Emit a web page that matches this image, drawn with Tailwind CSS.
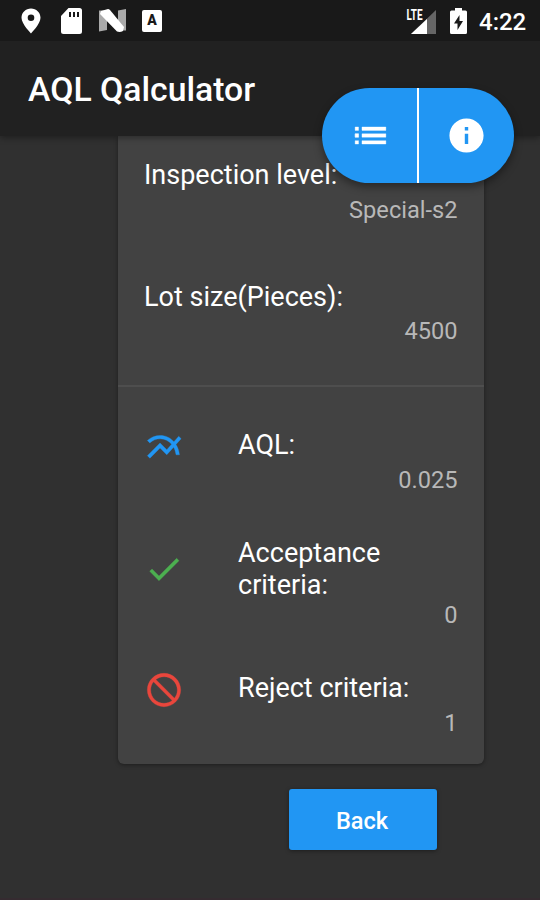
<!DOCTYPE html>
<html lang="en">
<head>
<meta charset="utf-8">
<title>AQL Qalculator</title>
<script src="https://cdn.jsdelivr.net/npm/@tailwindcss/browser@4"></script>
</head>
<body class="bg-[#303030] font-[Roboto,sans-serif] text-white">
<div class="relative flex h-[900px] w-[540px] flex-col overflow-hidden border-b-2 border-[#352b30] bg-[#303030]">
  <header class="relative z-10 h-[136px] shrink-0 bg-[#212121] shadow-[0_2px_6px_rgba(0,0,0,0.35)]">
    <div class="flex h-[41px] items-center bg-[#191919] pl-[21px] pr-[14px]">
      <svg class="h-[26px] w-5" viewBox="0 0 20 26"><path fill="#fff" fill-rule="evenodd" d="M10 0.5C4.800.5.500 4.500.500 9.800.500 16 10 25.500 10 25.500S19.500 16 19.500 9.800C19.500 4.500 15.200.500 10 .500ZM10 6.500a3.300 3.300 0 1 1 0 6.600 3.300 3.300 0 0 1 0-6.600Z"/></svg>
      <svg class="ml-5 h-[26px] w-[21px]" viewBox="0 0 21 26"><path fill="#fff" fill-rule="evenodd" d="M7.500 0H18.500Q21 0 21 2.500V23.500Q21 26 18.500 26H2.500Q0 26 0 23.500V8ZM8 4V9H10V4ZM12 4V9H14V4ZM16 4V9H18V4Z"/></svg>
      <svg class="ml-[17px] h-[23px] w-[27px]" viewBox="0 0 27 23"><path fill="#aaa" d="M0 1.500H8V21L0 22.500ZM19 1.500 27 0V21.500H19Z"/><path fill="#fff" d="M2 2 9 0Q10 0 11 1L25 18 24 22Q21 23.500 18 22.500L1 5Z"/></svg>
      <div class="ml-[16px] flex h-[22px] w-5 items-center justify-center rounded-[2px] bg-white text-[14px] font-black text-[#191919]">A</div>
      <svg class="ml-auto h-[26px] w-[31px]" viewBox="0 0 31 26"><path fill="#666" d="M30 2V26H5Z"/><path fill="#fff" d="M21 11V26H5Z"/><path fill="#191919" d="M0 0H17.500V13H0Z"/><text x="0.500" y="12" fill="#fff" font-family="Roboto" font-size="14" font-weight="700" textLength="16" lengthAdjust="spacingAndGlyphs">LTE</text></svg>
      <svg class="ml-[13px] h-[26px] w-[17px]" viewBox="0 0 17 26"><path fill="#fff" fill-rule="evenodd" d="M5 0H12V2.500H15.500Q17 2.500 17 4V24.500Q17 26 15.500 26H1.500Q0 26 0 24.500V4Q0 2.500 1.500 2.500H5ZM9.500 7 4 15.500H7.500V22L13 13H9.500Z"/></svg>
      <div class="ml-3 w-[47px] whitespace-nowrap pt-[3px] text-[24px] leading-7 font-medium">4:22</div>
    </div>
    <h1 class="pl-[28px] pt-[29px] text-[33.75px] leading-10 font-medium">AQL Qalculator</h1>
  </header>

  <nav class="absolute left-[322px] top-[88px] z-20 flex h-[95px] w-[192px] overflow-hidden rounded-full bg-[#2196f3] shadow-[0_4px_9px_rgba(0,0,0,0.4)]">
    <button class="flex w-[95px] items-center justify-center pl-px" aria-label="List">
      <svg class="h-[41px] w-[41px]" viewBox="0 0 24 24" fill="#fff" stroke="#fff" stroke-width=".2"><path d="M3 13h2v-2H3v2zm0 4h2v-2H3v2zm0-4h2v-2H3v2zm0-4h2V7H3v2zm4 4h14v-2H7v2zm0 4h14v-2H7v2zM7 7v2h14V7H7z"/></svg>
    </button>
    <div class="w-[2px] bg-white"></div>
    <button class="flex w-[95px] items-center justify-center" aria-label="Information">
      <svg class="h-[41px] w-[41px]" viewBox="0 0 24 24" fill="#fff"><path d="M12 2C6.480 2 2 6.480 2 12s4.480 10 10 10 10-4.480 10-10S17.520 2 12 2zm1 15h-2v-6h2v6zm0-8h-2V7h2v2z"/></svg>
    </button>
  </nav>

  <main class="flex flex-col">
    <section class="ml-[117.500px] h-[627.500px] w-[366.500px] rounded-b-[6px] bg-[#424242] text-[27px] leading-8 shadow-[0_1px_4px_rgba(0,0,0,0.4)]">
      <div class="flex h-[251px] flex-col border-b-2 border-[#4e4e4e] px-[26.500px] pt-[23px]">
        <div class="h-[122px]">
          <div>Inspection level:</div>
          <div class="pt-[5px] text-right text-[23.6px] leading-7 text-[#b8b8b8]">Special-s2</div>
        </div>
        <div>
          <div>Lot size(Pieces):</div>
          <div class="pt-[4px] text-right text-[23.6px] leading-7 text-[#b8b8b8]">4500</div>
        </div>
      </div>
      <div class="flex flex-col px-[26.500px] pt-[42px]">
        <div class="flex h-[108px] items-start">
          <svg class="-mt-[2px] h-[40.500px] w-[40.500px] shrink-0" viewBox="0 0 24 24" fill="#2196f3" stroke="#2196f3" stroke-width=".2"><path d="M22 6.920l-1.410-1.410-2.850 3.210C15.680 6.400 12.830 5 9.610 5 6.720 5 4.070 6.160 2 8l1.420 1.420C5.120 7.930 7.270 7 9.610 7c2.740 0 5.090 1.260 6.770 3.240l-2.880 3.240-4-4L2 16.990l1.500 1.500 6-6.010 4 4 4.050-4.550c.750 1.350 1.250 2.900 1.440 4.550H21c-.220-2.300-.950-4.390-2.040-6.140L22 6.920z"/></svg>
          <div class="ml-[53.500px] grow">
            <div>AQL:</div>
            <div class="pt-[5px] text-right text-[23.6px] leading-7 text-[#b8b8b8]">0.025</div>
          </div>
        </div>
        <div class="flex h-[135px] items-start">
          <svg class="mt-[12px] h-[40px] w-[40px] shrink-0" viewBox="0 0 24 24" fill="#4caf50" stroke="#4caf50" stroke-width=".2"><path d="M9 16.170L4.830 12l-1.420 1.410L9 19 21 7l-1.410-1.410z"/></svg>
          <div class="ml-[54px] grow">
            <div>Acceptance<br>criteria:</div>
            <div class="text-right text-[23.6px] leading-7 text-[#b8b8b8]">0</div>
          </div>
        </div>
        <div class="flex items-start">
          <svg class="-mt-[2px] h-[40px] w-[40px] shrink-0" viewBox="0 0 24 24" fill="#e9463c" stroke="#e9463c" stroke-width=".2"><path d="M12 2C6.480 2 2 6.480 2 12s4.480 10 10 10 10-4.480 10-10S17.520 2 12 2zM4 12c0-4.420 3.580-8 8-8 1.850 0 3.550.630 4.900 1.690L5.690 16.900C4.630 15.550 4 13.850 4 12zm8 8c-1.850 0-3.550-.630-4.900-1.690L18.310 7.100C19.370 8.450 20 10.150 20 12c0 4.420-3.580 8-8 8z" transform="matrix(-1 0 0 1 24 0)"/></svg>
          <div class="ml-[54px] grow">
            <div>Reject criteria:</div>
            <div class="pt-[5px] text-right text-[23.6px] leading-7 text-[#b8b8b8]">1</div>
          </div>
        </div>
      </div>
    </section>
    <button class="ml-[289px] mt-[25px] h-[61px] w-[148px] rounded-[3px] bg-[#2196f3] pt-[5px] pr-[2px] text-[23.6px] font-medium shadow-[0_1px_4px_rgba(0,0,0,0.4)]">Back</button>
  </main>
</div>
</body>
</html>
